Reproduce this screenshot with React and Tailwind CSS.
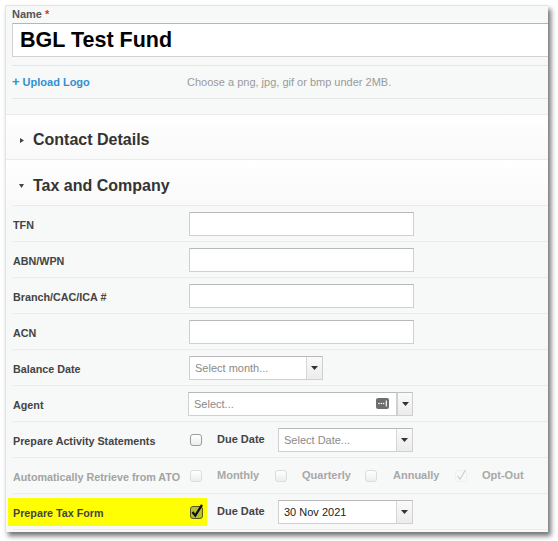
import React from 'react';

// Small dropdown arrow used by the select boxes
function Caret() {
  return (
    <svg width="7" height="4" viewBox="0 0 7 4">
      <path d="M0 0h7L3.5 4z" fill="#333" />
    </svg>
  );
}

function ArrowButton({ standalone }) {
  return (
    <div
      className={
        'flex h-full w-[16px] items-center justify-center bg-gradient-to-b from-[#fafafa] to-[#ececec] ' +
        (standalone ? 'border border-[#cfcfcf] border-t-[#bdbdbd]' : 'border-l border-[#d6d6d6]')
      }
    >
      <Caret />
    </div>
  );
}

function TextInput() {
  return <div className="h-[24px] w-[225px] border border-[#d0d0d0] border-t-[#b8b8b8] bg-white" />;
}

function Select({ width, placeholder, value }) {
  return (
    <div
      className="flex h-[24px] items-center border border-[#d0d0d0] border-t-[#b8b8b8] bg-white"
      style={{ width }}
    >
      <span className={'flex-1 pl-[5px] pt-[1px] text-[11px] ' + (value ? 'text-[#222]' : 'text-[#8a8a8a]')}>
        {value || placeholder}
      </span>
      <ArrowButton />
    </div>
  );
}

function Checkbox({ disabled }) {
  return (
    <div
      className={
        'h-[12px] w-[12px] shrink-0 rounded-[3px] border bg-gradient-to-b from-white to-[#ededed] ' +
        (disabled ? 'border-[#dcdcdc]' : 'border-[#9b9b9b]')
      }
    />
  );
}

function CheckedBox() {
  return (
    <svg width="14" height="15" viewBox="0 0 14 15" className="shrink-0">
      <rect x="0.5" y="2.5" width="12" height="12" rx="2.5" fill="#b7c232" stroke="#55591c" />
      <path d="M2.4 8l2.9 3.6L12 0.8" fill="none" stroke="#111" strokeWidth="2.3" />
    </svg>
  );
}

function FaintCheck() {
  return (
    <svg width="12" height="13" viewBox="0 0 12 13" className="shrink-0">
      <rect x="0.5" y="1.5" width="11" height="11" rx="2" fill="none" stroke="#f0f0f0" />
      <path d="M2.5 7l2.5 3.2L10.5 1" fill="none" stroke="#cdcdcd" strokeWidth="1.2" />
    </svg>
  );
}

function LookupIcon() {
  return (
    <svg width="13" height="11" viewBox="0 0 13 11">
      <rect x="0" y="0" width="13" height="11" rx="2" fill="#6e6e6e" />
      <circle cx="3" cy="5.5" r="0.8" fill="#fff" />
      <circle cx="5.3" cy="5.5" r="0.8" fill="#fff" />
      <circle cx="7.6" cy="5.5" r="0.8" fill="#fff" />
      <rect x="9.7" y="2.5" width="1.2" height="6" fill="#fff" />
    </svg>
  );
}

function Row({ label, muted, children }) {
  return (
    <div className="ml-[7px] flex h-[36px] items-center border-b border-[#ececec]">
      <div className={'w-[176px] pt-[3px] text-[10.75px] font-bold ' + (muted ? 'text-[#a3a3a3]' : 'text-[#444]')}>
        {label}
      </div>
      {children}
    </div>
  );
}

function SectionHeader({ title, open, fullRule }) {
  return (
    <div
      className={
        'flex h-[45px] items-center bg-gradient-to-b from-white to-[#f9f9f9] pt-[6px] ' +
        (fullRule ? 'border-b border-[#ebebeb]' : '')
      }
    >
      <div className="flex w-[27px] justify-center pl-[4px]">
        {open ? (
          <svg width="5" height="4" viewBox="0 0 5 4"><path d="M0 0h5L2.5 4z" fill="#444" /></svg>
        ) : (
          <svg width="4" height="5" viewBox="0 0 4 5"><path d="M0 0v5l4-2.5z" fill="#444" /></svg>
        )}
      </div>
      <span className="text-[16px] font-bold text-[#333]">{title}</span>
    </div>
  );
}

export default function App() {
  return (
    <div className="h-[541px] w-[558px] overflow-hidden bg-white pl-[5px] pt-[5px] font-['Liberation_Sans',Arial,sans-serif]">
      <div className="h-[527px] w-[543px] overflow-hidden border-l border-t border-[#e4e4e4] bg-[#f7f8f8] shadow-[3px_4px_5px_rgba(0,0,0,0.55)]">
        {/* Fund name */}
        <div className="pl-[6px]">
          <div className="border-b border-[#e6e6e6] pb-[8px]">
            <div className="pt-[2px] text-[11px] font-bold leading-[12px] text-[#555]">
              Name <span className="text-[#d9322f]">*</span>
            </div>
            <div className="-mr-[3px] mt-[3px] flex h-[34px] items-center border border-[#d2d2d2] border-t-[#b5b5b5] bg-white pl-[7px] text-[21.5px] font-bold text-black">
              BGL Test Fund
            </div>
          </div>
          <div className="flex h-[33px] items-center border-b border-[#e6e6e6] text-[11px]">
            <span className="w-[175px] font-bold text-[#3190d0]">
              <span className="mr-[3px] text-[13px]">+</span>Upload Logo
            </span>
            <span className="text-[#9a9a9a]">Choose a png, jpg, gif or bmp under 2MB.</span>
          </div>
        </div>

        {/* Collapsible sections */}
        <div className="mt-[15px] border-t border-[#ebebeb]">
          <SectionHeader title="Contact Details" fullRule />
          <div className="ml-[7px] border-b border-[#ebebeb]">
            <div className="-ml-[7px]">
              <SectionHeader title="Tax and Company" open />
            </div>
          </div>
        </div>

        <Row label="TFN"><TextInput /></Row>
        <Row label="ABN/WPN"><TextInput /></Row>
        <Row label="Branch/CAC/ICA #"><TextInput /></Row>
        <Row label="ACN"><TextInput /></Row>
        <Row label="Balance Date">
          <Select width={134} placeholder="Select month..." />
        </Row>
        <Row label="Agent">
          <div className="-ml-[1px] flex h-[24px]">
            <div className="flex w-[209px] items-center justify-between border border-[#d0d0d0] border-t-[#b8b8b8] bg-white pl-[5px] pr-[7px]">
              <span className="pt-[1px] text-[11px] text-[#8a8a8a]">Select...</span>
              <LookupIcon />
            </div>
            <ArrowButton standalone />
          </div>
        </Row>
        <Row label="Prepare Activity Statements">
          <div className="ml-[1px] flex items-center">
            <Checkbox />
            <span className="ml-[15px] w-[61px] text-[11px] font-bold text-[#444]">Due Date</span>
            <Select width={135} placeholder="Select Date..." />
          </div>
        </Row>
        <Row label="Automatically Retrieve from ATO" muted>
          <div className="ml-[1px] flex items-center text-[11px] font-bold text-[#a8a8a8]">
            <div className="flex w-[85px] items-center">
              <Checkbox disabled />
              <span className="ml-[15px]">Monthly</span>
            </div>
            <div className="flex w-[90px] items-center">
              <Checkbox disabled />
              <span className="ml-[15px]">Quarterly</span>
            </div>
            <div className="flex w-[90px] items-center">
              <Checkbox disabled />
              <span className="ml-[16px]">Annually</span>
            </div>
            <div className="flex items-center">
              <FaintCheck />
              <span className="ml-[15px]">Opt-Out</span>
            </div>
          </div>
        </Row>
        <div className="ml-[7px] flex h-[36px] items-center border-b border-[#ececec]">
          <div className="-ml-[5px] flex h-[28px] w-[199px] items-center bg-[#ffff00] pl-[5px]">
            <span className="w-[177px] pt-[3px] text-[10.75px] font-bold text-[#444]">Prepare Tax Form</span>
            <CheckedBox />
          </div>
          <span className="ml-[10px] w-[61px] text-[11px] font-bold text-[#444]">Due Date</span>
          <Select width={135} value="30 Nov 2021" />
        </div>
      </div>
    </div>
  );
}
